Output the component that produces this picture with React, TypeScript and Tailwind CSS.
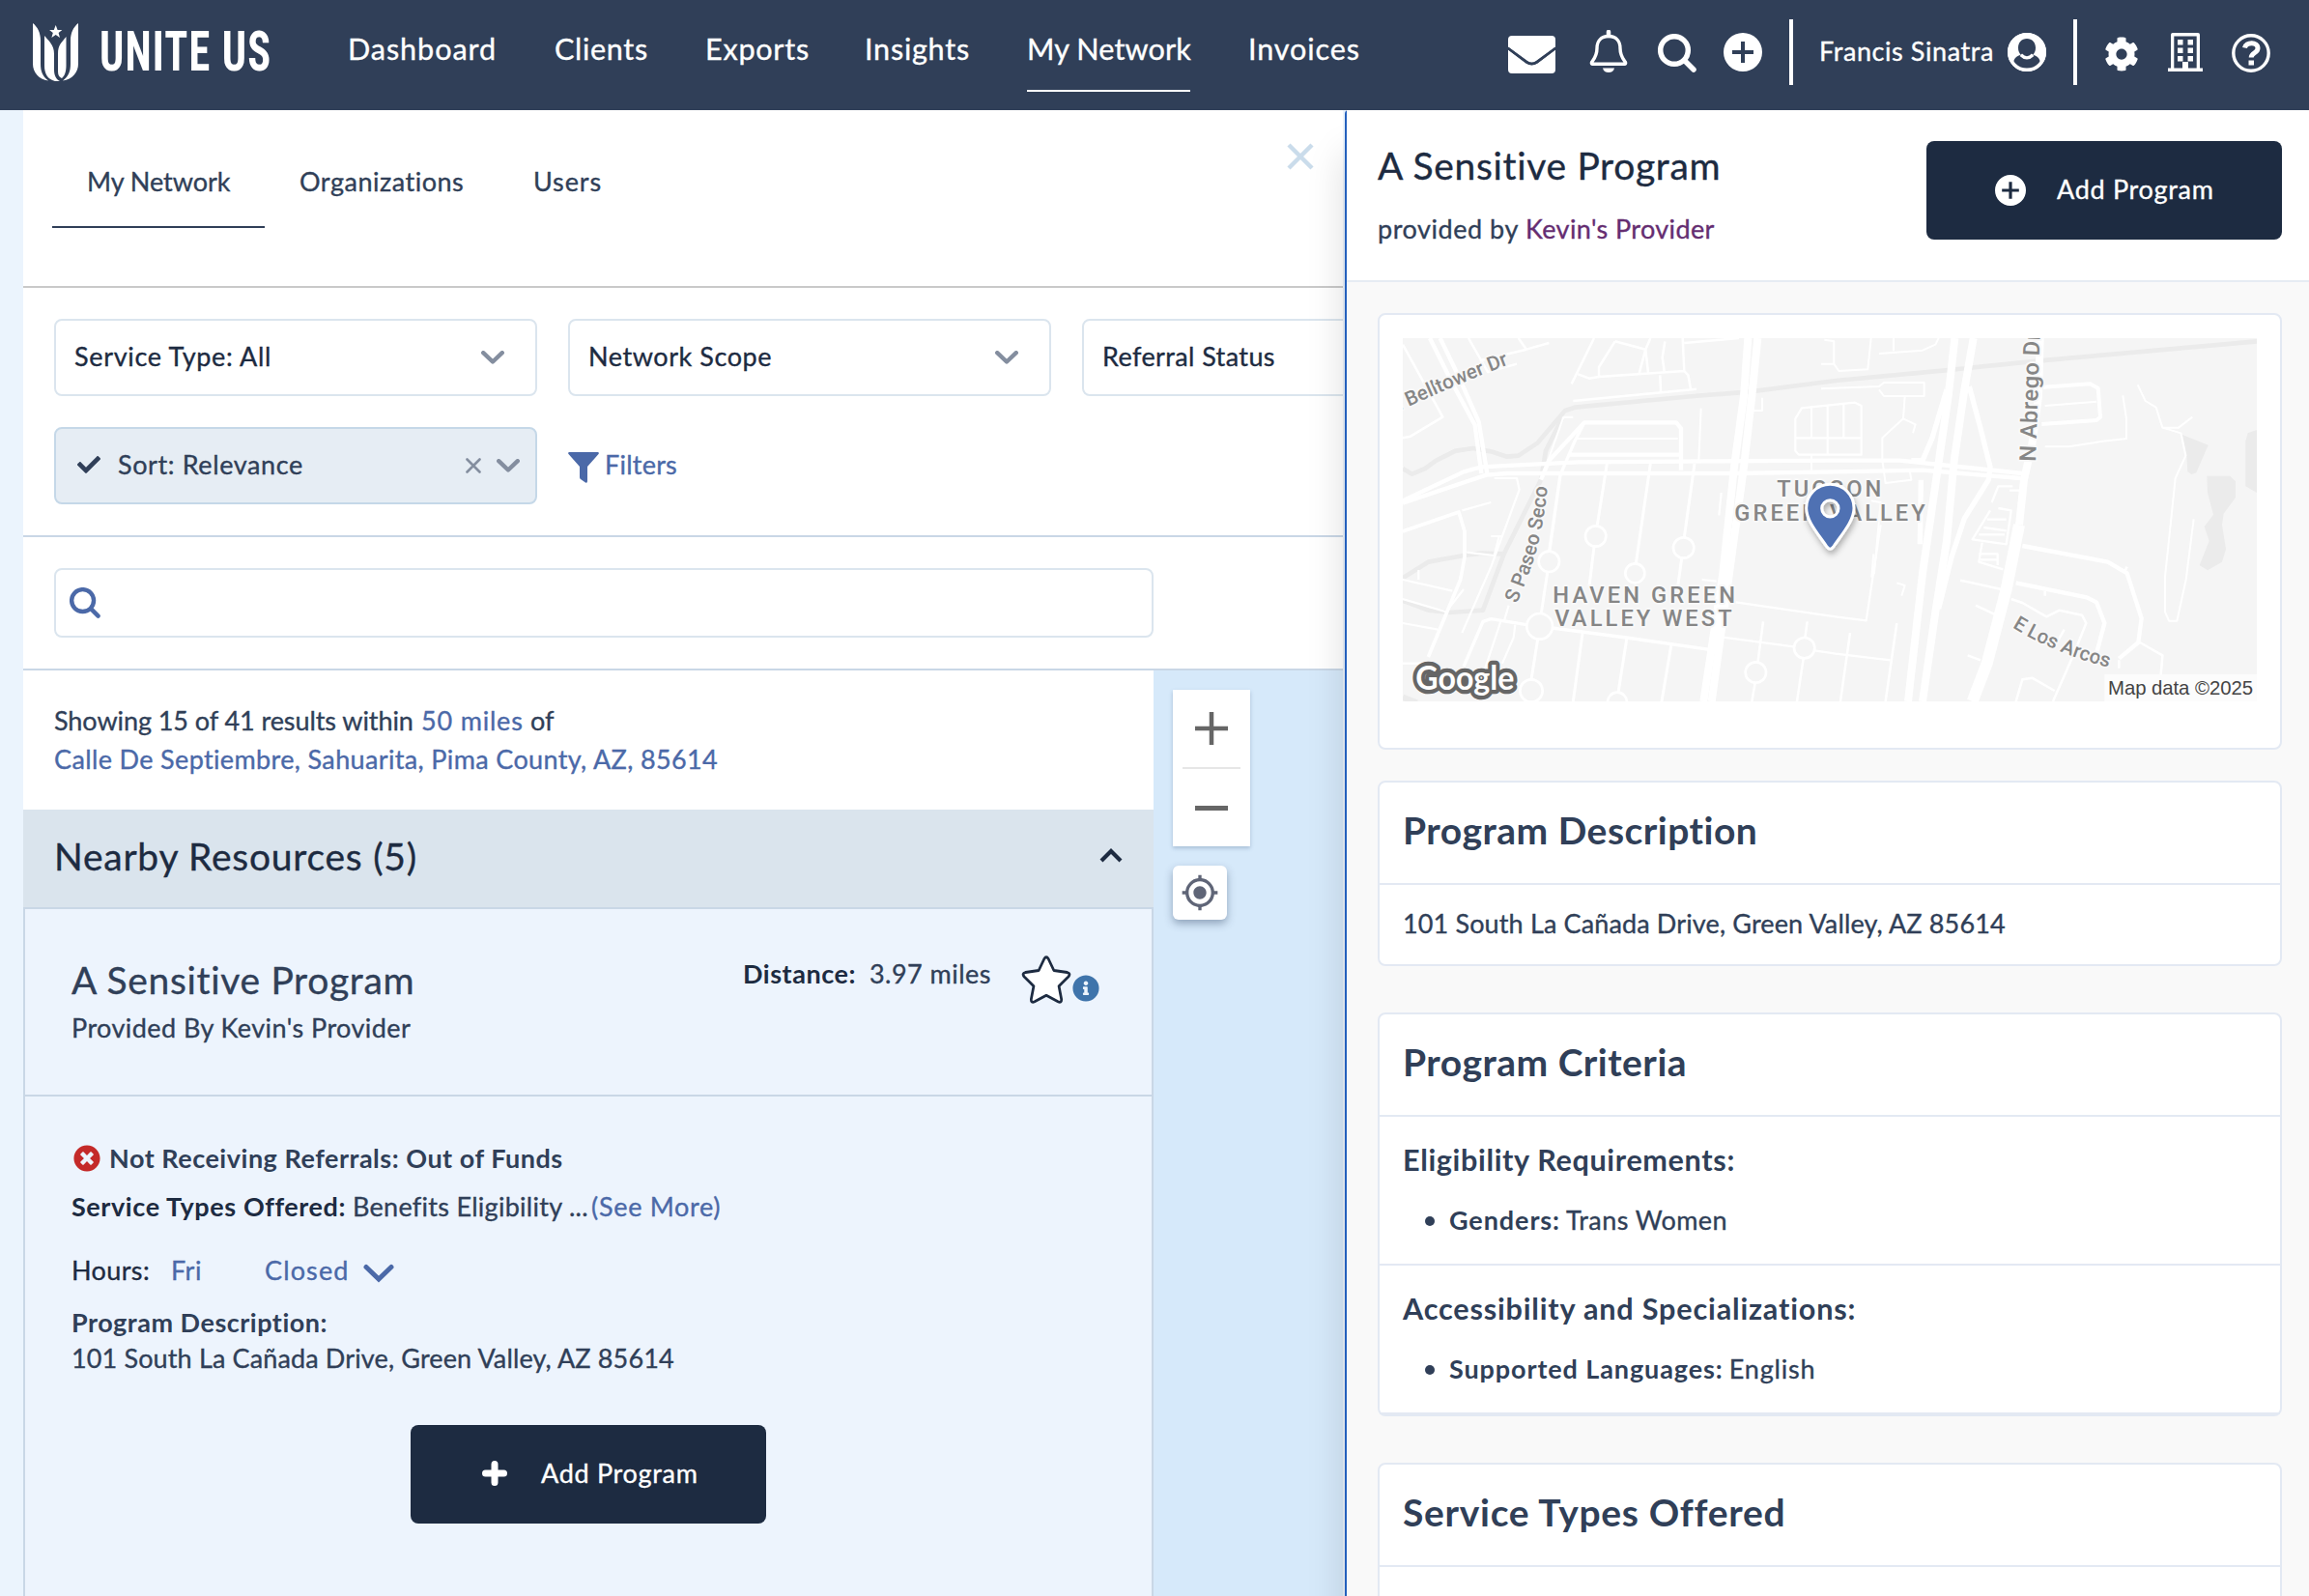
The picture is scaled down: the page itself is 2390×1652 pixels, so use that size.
import type { ReactNode } from "react";
import { FaCheck, FaCog, FaInfoCircle, FaTimesCircle } from "react-icons/fa";
import { MdMyLocation } from "react-icons/md";

function LogoMark() {
  return (
    <svg className="h-[60px] w-[47px]" viewBox="0 0 47 60" fill="#fff">
      <path d="M0 0C5 4 8 10 8 18V42C8 50 10 55 16 59.500C6 58 0 51 0 42Z" />
      <path d="M47 0C42 4 39 10 39 18V42C39 50 37 55 31 59.500C41 58 47 51 47 42Z" />
      <path d="M12 13C16 18 22 22 22 32V48C22 54 24 58 28 60H23C15 58 12 52 12 44Z" />
      <path d="M34.500 14C30 20 26 22 26 32V50C26 54 27.500 56 30 57C33.500 54 34.500 49 34.500 44Z" />
      <path d="M23.700 2L25.600 7H30.300L26.600 10L28 15L23.700 12L19.400 15L20.800 10L17.100 7H21.800Z" />
    </svg>
  );
}

function PlusCircle({ className }: { className: string }) {
  return (
    <svg className={className} viewBox="0 0 40 40">
      <path
        fill="#fff"
        fillRule="evenodd"
        d="M20 0A20 20 0 1 1 20 40A20 20 0 1 1 20 0ZM18 9V18H9V22H18V31H22V22H31V18H22V9Z"
      />
    </svg>
  );
}

function SearchIcon({ className, width = 5 }: { className: string; width?: number }) {
  return (
    <svg className={className} viewBox="0 0 40 40" fill="none" stroke="currentColor" strokeWidth={width} strokeLinecap="round">
      <circle cx="17" cy="17" r="14.300" />
      <path d="M28 28L37 37" />
    </svg>
  );
}

function Chevron({ className }: { className: string }) {
  return (
    <svg className={className} viewBox="0 0 24 14" fill="none" stroke="currentColor" strokeWidth="4.400" strokeLinecap="round" strokeLinejoin="round">
      <path d="M2.200 2.200L12 11.500L21.800 2.200" />
    </svg>
  );
}

function NavItem({ children, active, className }: { children: ReactNode; active?: boolean; className: string }) {
  return (
    <a
      className={`mt-[31px] h-[64px] whitespace-nowrap border-b-2 text-[30.600px] leading-10 ${active ? "border-white" : "border-transparent"} ${className}`}
    >
      {children}
    </a>
  );
}

function TopBar() {
  return (
    <header className="flex h-[114px] shrink-0 items-start bg-[#303f58] text-white">
      <div className="ml-[34px] mt-6 flex w-[326px]">
        <LogoMark />
        <span className="ml-[22px] mt-[-1px] inline-block h-[60px] origin-left scale-x-[0.765] whitespace-nowrap font-['Roboto_Condensed'] text-[58px] font-bold leading-[60px] tracking-[1.500px]">
          UNITE US
        </span>
      </div>
      <nav className="flex w-[1050px]">
        <NavItem className="w-[154px] tracking-[0.920px]">Dashboard</NavItem>
        <NavItem className="ml-[60px] w-[96px] tracking-[0.660px]">Clients</NavItem>
        <NavItem className="ml-[60px] w-[107px] tracking-[0.740px]">Exports</NavItem>
        <NavItem className="ml-[58px] w-[109px] tracking-[0.740px]">Insights</NavItem>
        <NavItem active className="ml-[59px] w-[169px] tracking-[0.130px]">My Network</NavItem>
        <NavItem className="ml-[60px] w-[117px] tracking-[0.880px]">Invoices</NavItem>
      </nav>
      <div className="ml-[151px] flex h-[108px] items-center">
        <svg className="mt-[5px] h-[39px] w-[49px]" viewBox="0 0 49 39" fill="#fff">
          <path d="M4 0H45Q49 0 49 4V11.500L29 26Q24.500 29 20 26L0 11.500V4Q0 0 4 0Z" />
          <path d="M0 14.500L18.500 28.500Q24.500 32.500 30.500 28.500L49 14.500V35Q49 39 45 39H4Q0 39 0 35Z" />
          <path d="M0 13L19 27.200Q24.500 31 30 27.200L49 13" fill="none" stroke="#303f58" strokeWidth="2.400" />
        </svg>
        <svg className="ml-[35px] mt-[-2px] h-[44px] w-[40px]" viewBox="0 0 40 44" fill="none">
          <path d="M20 2V6" stroke="#fff" strokeWidth="4.500" strokeLinecap="round" />
          <path
            d="M20 6.500C12 6.500 8 12 8 19C8 27 5 30 2.500 33.500Q2 35.200 3.500 35.200H36.500Q38 35.200 37.500 33.500C35 30 32 27 32 19C32 12 28 6.500 20 6.500Z"
            stroke="#fff"
            strokeWidth="3.400"
            strokeLinejoin="round"
          />
          <path d="M14 39.500H26C25.500 42.500 23 44 20 44C17 44 14.500 42.500 14 39.500Z" fill="#fff" />
        </svg>
        <SearchIcon className="ml-[31px] mt-[2px] size-10" width={5.5} />
        <PlusCircle className="ml-[28px] size-10" />
        <div className="ml-[28px] h-[68px] w-1 bg-white" />
        <span className="ml-[27px] w-[181px] whitespace-nowrap pb-[2px] text-[27px] leading-8 tracking-[0.580px]">Francis Sinatra</span>
        <svg className="ml-[14px] size-10" viewBox="0 0 40 40">
          <circle cx="20" cy="20" r="18.300" fill="none" stroke="#fff" strokeWidth="3.400" />
          <path
            fill="#fff"
            fillRule="evenodd"
            d="M20 0A20 20 0 1 1 20 40A20 20 0 1 1 20 0ZM20 6C14.500 6 11 10 11 15.500C11 18.500 12 21 13.800 22.800C9 24 6.500 27 6.200 30.500C9.500 34.500 14.300 37.200 20 37.200C25.700 37.200 30.500 34.500 33.800 30.500C33.500 27 31 24 26.200 22.800C28 21 29 18.500 29 15.500C29 10 25.500 6 20 6Z"
          />
          <path d="M13.800 22.800Q20 29 26.200 22.800" fill="none" stroke="#fff" strokeWidth="3.400" />
        </svg>
        <div className="ml-[28px] h-[68px] w-1 bg-white" />
        <FaCog className="ml-[28px] mt-[3px] size-9" />
        <svg className="ml-[28px] size-[40px]" viewBox="0 0 40 40">
          <path
            fill="#fff"
            fillRule="evenodd"
            d="M7 0H33Q35 0 35 2V36.500H38V40H2V36.500H5V2Q5 0 7 0ZM8.300 3.400V36.500H17V30H23V36.500H31.700V3.400Z"
          />
          <path fill="#fff" d="M12 7H17.500V12.500H12ZM22.500 7H28V12.500H22.500ZM12 15.500H17.500V21H12ZM22.500 15.500H28V21H22.500ZM12 24H17.500V29.500H12ZM22.500 24H28V29.500H22.500Z" />
        </svg>
        <svg className="ml-[28px] mt-[2px] size-10" viewBox="0 0 40 40" fill="none" stroke="#fff">
          <circle cx="20" cy="20" r="18.200" strokeWidth="3.400" />
          <path d="M13.500 14.500C14.500 8.500 27 7.500 27 15C27 20 20.200 19.500 20.200 24.500" strokeWidth="5" />
          <path d="M17.500 27.500H23V32.500H17.500Z" fill="#fff" stroke="none" />
        </svg>
      </div>
    </header>
  );
}

function Select({ label, className = "" }: { label: string; className?: string }) {
  return (
    <div className="flex h-20 w-[500px] shrink-0 items-center justify-between rounded-lg border-2 border-[#dbe5ee] bg-white pb-[2px] pl-[19px] pr-8">
      <span className={`whitespace-nowrap text-[27px] leading-8 text-[#1d2b41] ${className}`}>{label}</span>
      <Chevron className="mt-[2px] h-[14px] w-6 text-[#848e9f]" />
    </div>
  );
}

function Filters() {
  return (
    <section className="flex flex-col gap-8 border-b-2 border-[#c9d7e6] py-8 pl-8">
      <div className="flex gap-8">
        <Select label="Service Type: All" className="tracking-[0.670px]" />
        <Select label="Network Scope" className="tracking-[0.560px]" />
        <Select label="Referral Status" className="tracking-[0.400px]" />
      </div>
      <div className="flex gap-8">
        <div className="flex h-20 w-[500px] items-center rounded-lg border-2 border-[#c5d8e8] bg-[#e6edf4] pb-[2px] pl-[22px] text-[#303f58]">
          <FaCheck className="size-6" />
          <span className="ml-[18px] w-[360px] text-[27px] leading-8 tracking-[0.610px]">Sort: Relevance</span>
          <svg className="mt-[2px] h-4 w-4" viewBox="0 0 16 16" fill="none" stroke="#848e9f" strokeWidth="2.600" strokeLinecap="round">
            <path d="M1.500 1.500L14.500 14.500M14.500 1.500L1.500 14.500" />
          </svg>
          <Chevron className="ml-4 mt-[2px] h-[14px] w-6 text-[#848e9f]" />
        </div>
        <div className="flex items-center gap-[6px] pb-[3px] text-[#4b69a8]">
          <svg className="mt-[7px] size-8" viewBox="0 0 32 32" fill="currentColor">
            <path d="M1 0H31Q32.500 0.500 31.500 2L20 15V30Q20 32.500 18 31.500L13 28Q12 27.500 12 26V15L0.500 2Q-0.500 0.500 1 0Z" />
          </svg>
          <span className="text-[27px] leading-8 tracking-[0.240px]">Filters</span>
        </div>
      </div>
    </section>
  );
}

function ResultCard() {
  return (
    <article className="h-[720px] border-2 border-[#c9d7e6] bg-[#edf4fd] text-[27px] leading-8 text-[#303f58]">
      <div className="flex h-[194px] justify-between border-b-2 border-[#c9d7e6] pl-12">
        <div className="pt-[49px]">
          <h3 className="text-[39px] leading-[48px] tracking-[0.680px]">A Sensitive Program</h3>
          <p className="mt-[10px] tracking-[0.440px]">Provided By Kevin's Provider</p>
        </div>
        <div className="flex pr-[54px] pt-[48px]">
          <span className="mt-[3px] font-bold tracking-[0.540px] text-[#1d2b41]">Distance:</span>
          <span className="ml-[14px] mt-[3px] tracking-[0.480px]">3.97 miles</span>
          <svg className="ml-[31px] h-[50px] w-[53px]" viewBox="0 0 54 50" preserveAspectRatio="none">
            <path
              d="M24.300 3.500Q26.500 0 28.700 3.500L34.500 15.500L48.500 17.500Q52.500 18.700 49.800 22L39.800 31.700L42.500 45.500Q42.500 49.500 38.800 47.800L26.500 41.300L14.200 47.800Q10.500 49.500 10.500 45.500L13.200 31.700L3.200 22Q0.500 18.700 4.500 17.500L18.500 15.500Z"
              fill="#fff"
              stroke="#1d2b41"
              strokeWidth="2.800"
              strokeLinejoin="round"
            />
          </svg>
          <FaInfoCircle className="mt-[20px] size-7 text-[#3f74ab]" />
        </div>
      </div>
      <div className="pl-12 pt-12">
        <p className="flex items-center font-bold tracking-[0.510px]">
          <FaTimesCircle className="ml-[2px] mr-[9px] size-7 text-[#c42a29]" />
          Not Receiving Referrals: Out of Funds
        </p>
        <p className="mt-[18px] flex">
          <span className="w-[291px] font-bold tracking-[0.590px] text-[#1d2b41]">Service Types Offered:</span>
          <span className="w-[247px] tracking-[0.280px]">Benefits Eligibility ...</span>
          <span className="tracking-[0.700px] text-[#4b69a8]">(See More)</span>
        </p>
        <p className="mt-[34px] flex items-center text-[#4b69a8]">
          <span className="w-[103px] tracking-[0.380px] text-[#1d2b41]">Hours:</span>
          <span className="w-[97px] tracking-[0.500px]">Fri</span>
          <span className="w-[102px] tracking-[1.130px]">Closed</span>
          <svg className="mt-[5px] h-5 w-8" viewBox="0 0 32 20" fill="none" stroke="currentColor" strokeWidth="5" strokeLinecap="round">
            <path d="M3 3.500L16 16L29 3.500" />
          </svg>
        </p>
        <p className="mt-[22px] font-bold tracking-[0.500px]">Program Description:</p>
        <p className="mt-[5px] tracking-[0.140px]">101 South La Cañada Drive, Green Valley, AZ 85614</p>
      </div>
      <button className="mx-auto mt-[53px] flex h-[102px] w-[368px] items-center rounded-lg bg-[#1d2b41] pb-[2px] pl-[74px] text-white">
        <svg className="size-[26px]" viewBox="0 0 26 26" stroke="#fff" strokeWidth="7" strokeLinecap="round">
          <path d="M13 3.500V22.500M3.500 13H22.500" />
        </svg>
        <span className="ml-[35px] leading-8 tracking-[0.700px]">Add Program</span>
      </button>
    </article>
  );
}

function NetworkPanel() {
  return (
    <main className="ml-6 flex w-[1366px] shrink-0 flex-col overflow-hidden bg-white">
      <div className="flex h-[184px] shrink-0 items-start justify-between border-b-2 border-[#c9c9c9] text-[27px] leading-8 text-[#303f58]">
        <div className="ml-[30px] flex pt-[58px]">
          <a className="h-16 w-[220px] border-b-2 border-[#303f58] pl-9 tracking-[-0.050px]">My Network</a>
          <a className="w-[242px] pl-9 tracking-[0.520px]">Organizations</a>
          <a className="pl-9 tracking-[0.900px]">Users</a>
        </div>
        <svg className="mr-[30px] mt-[34px] size-7" viewBox="0 0 28 28" stroke="#cadceb" strokeWidth="4.500">
          <path d="M2 2L26 26M26 2L2 26" />
        </svg>
      </div>
      <Filters />
      <div className="border-b-2 border-[#c9d7e6] py-8 pl-8">
        <div className="flex h-[72px] w-[1138px] items-center rounded-lg border-2 border-[#dbe5ee] pl-[14px]">
          <SearchIcon className="size-8 text-[#4b69a8]" width={5.5} />
        </div>
      </div>
      <div className="flex flex-1 bg-[#d6e9fa]">
        <div className="w-[1170px] bg-white">
          <div className="h-[144px] pl-8 pt-[32px] text-[27px] leading-10 text-[#4b69a8]">
            <p className="flex text-[#303f58]">
              <span className="w-[380px] whitespace-nowrap tracking-[-0.070px]">Showing 15 of 41 results within</span>
              <span className="w-[113px] tracking-[0.800px] text-[#4b69a8]">50 miles</span>
              <span>of</span>
            </p>
            <p className="tracking-[0.360px]">Calle De Septiembre, Sahuarita, Pima County, AZ, 85614</p>
          </div>
          <div className="flex h-[101px] items-center justify-between bg-[#dae4ed] pb-[5px] pl-8 pr-8">
            <h2 className="text-[39px] leading-[48px] tracking-[0.750px] text-[#1d2b41]">Nearby Resources (5)</h2>
            <svg className="mb-[3px] h-4 w-6" viewBox="0 0 24 16" fill="none" stroke="#1d2b41" strokeWidth="4.200">
              <path d="M2 14L12 4L22 14" />
            </svg>
          </div>
          <ResultCard />
        </div>
        <div className="pl-5 pt-5">
          <div className="flex h-[162px] w-20 flex-col items-center bg-white shadow-[0_2px_4px_rgba(60,90,130,0.3)]">
            <svg className="mt-[23px] size-[34px]" viewBox="0 0 34 34" stroke="#666" strokeWidth="4.500">
              <path d="M17 0V34M0 17H34" />
            </svg>
            <div className="mt-[23px] h-[2px] w-[60px] bg-[#e6e6e6]" />
            <div className="mt-[38px] h-[5px] w-[34px] bg-[#666]" />
          </div>
          <div className="mt-5 grid size-14 place-items-center rounded-md bg-white shadow-[0_4px_8px_rgba(60,80,110,0.45)]">
            <MdMyLocation className="size-10 text-[#5f6577]" />
          </div>
        </div>
      </div>
    </main>
  );
}

const label = "fill-[#868686] stroke-[#f8f8f8] font-['Roboto'] font-medium";

function LocationMap() {
  return (
    <svg className="h-[376px] w-[884px]" viewBox="156 120 2652 1128" fill="none" strokeLinejoin="round">
      <defs>
        <path id="belltower" d="M128 352C240 304 330 260 520 188" />
        <path id="paseo" d="M510 945C570 800 590 740 608 560" />
        <path id="arcos" d="M2048 1018Q2190 1105 2370 1148" />
        <filter id="pinShadow" x="-30%" y="-30%" width="160%" height="160%">
          <feDropShadow dx="4" dy="12" stdDeviation="9" floodOpacity="0.3" />
        </filter>
      </defs>
      <path fill="#f5f5f5" d="M156 120H2808V1248H156Z" />
      <g stroke="#ebebeb" strokeWidth="14">
        <path d="M156 525L185 542L225 525L260 500L320 470L375 462L430 472L480 488L515 485L575 445L660 345L690 335L1060 300L1230 287L1500 252L1840 220L2135 190L2808 130" />
        <path d="M650 370L600 470L585 560L470 790L405 965L300 972L235 965L156 935" />
        <path d="M156 865L235 815L345 795L400 788L470 790" />
        <path d="M156 1235L200 1252" strokeWidth="18" />
      </g>
      <g fill="#ebebeb">
        <path d="M2577 420L2657 452L2620 538L2605 543L2593 535L2590 480Z" />
        <path d="M2653 548H2725L2742 565V615L2705 665L2700 700L2712 775L2700 815L2655 841L2630 825L2660 750L2645 705L2673 668L2655 600Z" />
        <path d="M2808 405L2780 415L2773 440V580L2808 600Z" />
      </g>
      <g stroke="#fff">
        <g strokeWidth="24">
          <path d="M1228 120L1215 300L1185 520L1150 850L1090 1248" />
          <path d="M1258 120L1240 300L1215 520L1170 850L1115 1248" />
          <path d="M1870 120L1850 300L1815 540L1770 850L1725 1248" />
          <path d="M1928 120L1900 280L1868 500L1845 750L1810 970L1770 1248" />
          <path d="M2135 120L2130 300L2110 450L2085 560L2070 700" />
        </g>
        <path d="M2070 700L2030 900L1970 1130L1925 1248" strokeWidth="36" />
        <path d="M1765 560L1762 760M1915 270L1950 400L1980 520L1975 560L1900 680L1860 800L1820 960M1845 280L1800 430L1770 500H1735" strokeWidth="16" />
        <g strokeWidth="13">
          <path d="M156 625L345 535L400 520L500 515L700 505L1500 500H1700L2080 540" />
          <path d="M156 632L415 545L480 540H1180L1500 535L1770 530L2075 555" />
          <path d="M240 120L310 260L380 390L400 540" />
          <path d="M272 120L330 240L392 380L418 540" />
          <path d="M585 560L610 500L720 382H1005L1020 400V530" />
          <path d="M720 382L690 440L645 545L610 790" strokeWidth="10" />
          <path d="M670 482H1020" />
          <path d="M2080 765L2345 815L2405 850L2450 990L2440 1065L2380 1115" />
          <path d="M2060 880L2280 925L2310 940L2335 1005L2310 1100" />
          <path d="M156 720L330 660L348 720V800L335 870L310 930L235 1110" strokeWidth="11" />
          <path d="M345 1140L405 1000L430 992L540 1010M620 1020L850 1050L1130 1090" strokeWidth="10" />
        </g>
        <g strokeWidth="7.500">
          <path d="M156 140L280 365L180 425L156 430M360 120L420 225L510 200M515 120L540 155L610 135M395 190L540 155" />
          <path d="M750 120L680 262M815 130L910 155L890 230M765 240V210L815 130M700 232L735 245L765 240L1030 222L1042 235L1050 278M925 120L910 155L918 228M970 130L962 180L968 222M1025 120L1030 222M1030 135L1200 120M955 235L957 285M685 315L1068 278" />
          <path d="M690 432H1010M1082 338L1075 500M655 365H685M655 365L600 520" strokeWidth="6" />
          <path d="M790 510L760 700M750 768L735 890M925 510L880 820M1062 510L1030 738M1022 805L1010 890M605 848L585 980M575 1055L555 1180M715 1030L685 1248M852 1050L825 1220M990 1070L960 1248" strokeWidth="9" />
          <path d="M156 870L310 905M156 930L290 970L345 900M156 1005L265 1025M156 1130H230M440 555H510L518 590L430 830L340 1035M340 655L430 630M355 785L440 795L455 735M430 735H462M205 870V840M460 1000L410 1150M505 1010L500 1050L465 1130M485 950L470 1000" strokeWidth="6.500" />
          <path d="M1375 370V470L1385 482H1580V330L1560 320L1395 337ZM1425 335V430M1475 330V480M1525 325V430M1375 430H1580M1425 482V530M1272 305V345H1245M1145 600L1138 670M1190 940L1500 985L1595 997L1640 700M1120 1045L1370 1078M1435 1090L1500 1100L1670 1120M1085 870L1130 875" strokeWidth="6.500" />
          <path d="M1275 1000L1258 1130M1250 1190L1240 1248M1412 1000L1405 1050M1400 1115L1380 1248M1545 1035L1515 1248M1690 1005L1655 1248" />
          <path d="M1465 125L1495 130V200L1510 222L1600 217L1610 120M1455 200H1495M1680 120V160M1635 168L1770 158L1810 140L1820 120M1455 277L1635 270L1650 258H1775V300H1650L1635 280M1715 300L1710 370L1748 388L1740 415M1710 370L1645 430V500L1655 570L1735 560L1730 530M1610 625L1640 630L1620 850L1612 860L1618 790M1690 880L1715 888L1705 920" strokeWidth="6" />
          <path d="M2145 272L2290 262L2315 275L2322 365L2310 375L2140 387" strokeWidth="12" />
          <path d="M2150 330L2310 317M2150 457H2225L2330 440L2403 432V370L2392 298M2438 265L2462 315L2495 335L2515 398H2565L2608 365M2515 398L2572 415L2587 485L2555 555L2540 700L2523 860V970L2535 998H2560L2588 870L2612 682" strokeWidth="6" />
          <path d="M1985 630L2005 580H2050M2040 593H2080M1980 655L1925 745L2030 760L2045 655L2005 648M1970 683H2030M1960 708L2030 718M1945 730H2025M1955 755L1945 815L2020 838M1945 790H2003V825M1950 808H2003" strokeWidth="7" />
          <path d="M1887 872L2015 900M1935 950L2010 985M1910 1105L1950 1120M2045 930L2080 942L2155 985L2195 965L2265 980L2278 1005L2240 1100L2175 1248M2060 1248L2080 1180L2110 1175L2180 1215M2445 1065L2515 1105L2510 1165M2150 905V920M2210 1025L2190 1060M2405 830L2395 850M2380 1120V1145" />
        </g>
        <g fill="#f5f5f5" strokeWidth="8">
          <circle cx="755" cy="735" r="32" />
          <circle cx="1028" cy="771" r="32" />
          <circle cx="610" cy="814" r="32" />
          <circle cx="877" cy="850" r="30" />
          <circle cx="581" cy="1015" r="40" />
          <circle cx="555" cy="1215" r="35" />
          <circle cx="1252" cy="1158" r="32" />
          <circle cx="1403" cy="1082" r="32" />
          <circle cx="822" cy="1250" r="30" />
        </g>
      </g>
      <g className={label} strokeWidth="12" paintOrder="stroke">
        <text fontSize="62"><textPath href="#belltower">n Belltower Dr</textPath></text>
        <text fontSize="62"><textPath href="#paseo" textLength="378">S Paseo Seco</textPath></text>
        <text fontSize="62"><textPath href="#arcos" textLength="326">E Los Arcos</textPath></text>
        <text fontSize="71" transform="translate(2121 504) rotate(-88)" textLength="402">N Abrego Dr</text>
        <text fontSize="71" x="622" y="941" textLength="566">HAVEN GREEN</text>
        <text fontSize="71" x="628" y="1015" textLength="550">VALLEY WEST</text>
        <text fontSize="71" x="1318" y="613" textLength="324">TUCSON</text>
        <text fontSize="71" x="1186" y="688" textLength="592">GREEN VALLEY</text>
      </g>
      <text
        className="fill-white stroke-[#666] font-['Lato'] font-bold"
        x="196"
        y="1212"
        fontSize="104"
        strokeWidth="26"
        paintOrder="stroke"
        textLength="306"
        lengthAdjust="spacingAndGlyphs"
      >
        Google
      </text>
      <path
        filter="url(#pinShadow)"
        fill="#4f71b3"
        stroke="#fff"
        strokeWidth="9"
        fillRule="evenodd"
        d="M1483 574A74 74 0 0 1 1557 648C1557 685 1525 722 1493 768Q1483 781 1473 768C1441 722 1409 685 1409 648A74 74 0 0 1 1483 574ZM1483 623A26 26 0 1 0 1483 675A26 26 0 1 0 1483 623Z"
      />
      <path fill="#fff" fillOpacity="0.7" d="M2335 1163H2808V1248H2335Z" />
      <text className="fill-[#444] font-['Liberation_Sans']" x="2346" y="1228" fontSize="61" textLength="450">Map data ©2025</text>
    </svg>
  );
}

function Card({ title, titleClass, className = "", children }: { title?: string; titleClass?: string; className?: string; children?: ReactNode }) {
  return (
    <section className={`rounded-lg border-2 border-[#e3e9f3] bg-white ${className}`}>
      {title && (
        <h2 className={`flex h-[106px] items-center border-b-2 border-[#e3e9f3] pb-[6px] pl-6 text-[39px] font-bold leading-[48px] ${titleClass}`}>
          {title}
        </h2>
      )}
      {children}
    </section>
  );
}

function Criteria({ heading, headingClass, name, nameClass, value, valueClass }: Record<"heading" | "headingClass" | "name" | "nameClass" | "value" | "valueClass", string>) {
  return (
    <div className="h-[154px] border-b-2 border-[#e3e9f3] pl-6 pt-[27px]">
      <h3 className={`text-[30.600px] font-bold leading-9 ${headingClass}`}>{heading}</h3>
      <div className="mt-7 flex items-center">
        <i className="ml-[23px] mr-[15px] mt-[2px] size-[10px] rounded-full bg-[#303f58]" />
        <span className={`font-bold ${nameClass}`}>{name}</span>
        <span className={`ml-[6px] ${valueClass}`}>{value}</span>
      </div>
    </div>
  );
}

function ProgramPanel() {
  return (
    <aside className="relative z-10 ml-[2px] flex flex-1 flex-col rounded-tl border-l-2 border-[#2460bd] bg-[#f9f9f9] text-[27px] leading-8 text-[#303f58] shadow-[0_45px_40px_rgba(0,0,0,0.14)]">
      <div className="flex h-[178px] shrink-0 justify-between border-b-2 border-[#e6ecf3] bg-white pl-8 pr-7">
        <div className="pt-[33px]">
          <h1 className="text-[39px] leading-[48px] tracking-[0.680px] text-[#1d2b41]">A Sensitive Program</h1>
          <p className="mt-[26px] flex">
            <span className="w-[153px] tracking-[0.550px]">provided by</span>
            <span className="tracking-[0.380px] text-[#652d71]">Kevin's Provider</span>
          </p>
        </div>
        <button className="mt-8 flex h-[102px] w-[368px] items-center rounded-lg bg-[#1d2b41] pb-[2px] pl-[71px] text-white">
          <PlusCircle className="mt-[2px] size-8" />
          <span className="ml-8 tracking-[0.700px]">Add Program</span>
        </button>
      </div>
      <div className="pl-8 pr-7 pt-8">
        <Card className="h-[452px] p-6">
          <LocationMap />
        </Card>
        <Card title="Program Description" titleClass="tracking-[0.480px]" className="mt-8 h-[192px]">
          <p className="pl-6 pt-[24px] tracking-[0.140px]">101 South La Cañada Drive, Green Valley, AZ 85614</p>
        </Card>
        <Card title="Program Criteria" titleClass="tracking-[0.470px]" className="mt-12">
          <Criteria
            heading="Eligibility Requirements:"
            headingClass="tracking-[0.640px]"
            name="Genders:"
            nameClass="tracking-[0.910px]"
            value="Trans Women"
            valueClass="tracking-[0.400px]"
          />
          <Criteria
            heading="Accessibility and Specializations:"
            headingClass="tracking-[0.820px]"
            name="Supported Languages:"
            nameClass="tracking-[0.900px]"
            value="English"
            valueClass="tracking-[0.840px]"
          />
        </Card>
        <Card title="Service Types Offered" titleClass="tracking-[0.700px]" className="mt-12 h-[200px]" />
      </div>
    </aside>
  );
}

export default function App() {
  return (
    <div className="flex h-[1652px] w-[2390px] flex-col overflow-hidden bg-[#ebf4fd] font-['Lato',sans-serif] [-webkit-text-stroke:0.35px] [&_.font-bold]:[-webkit-text-stroke:0px]">
      <TopBar />
      <div className="flex min-h-0 flex-1 overflow-hidden">
        <NetworkPanel />
        <ProgramPanel />
      </div>
    </div>
  );
}
